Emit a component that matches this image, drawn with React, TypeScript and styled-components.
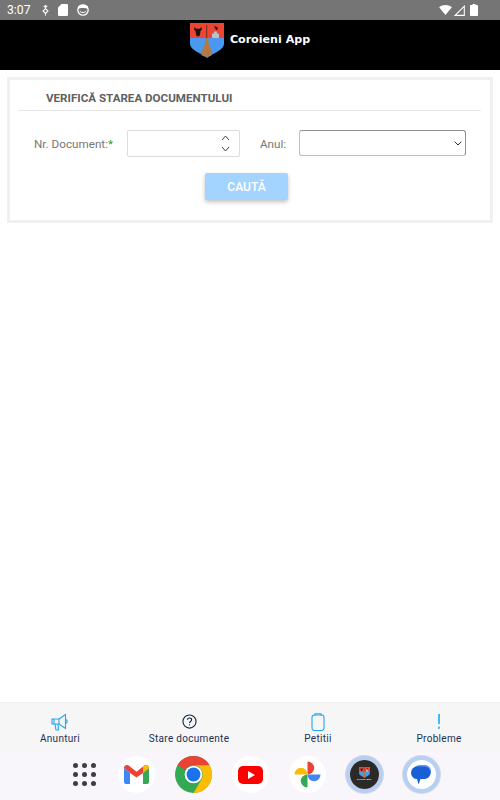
import styled, { createGlobalStyle } from 'styled-components'

const GlobalStyle = createGlobalStyle`
  html, body {
    margin: 0;
    padding: 0;
    background: #fff;
  }
  * {
    box-sizing: border-box;
  }
`

const tabs = [
  { label: 'Anunturi', icon: <MegaphoneIcon /> },
  { label: 'Stare documente', icon: <QuestionIcon /> },
  { label: 'Petitii', icon: <ClipboardIcon /> },
  { label: 'Probleme', icon: <BangIcon /> },
]

export default function App() {
  return (
    <Screen>
      <GlobalStyle />
      <StatusBar>
        <StatusLeft>
          <Clock>3:07</Clock>
          <UsbIcon />
          <SdIcon />
          <FaceIcon />
        </StatusLeft>
        <StatusRight>
          <WifiIcon />
          <SignalIcon />
          <BatteryIcon />
        </StatusRight>
      </StatusBar>

      <AppBar>
        <Shield />
        <AppTitle>Coroieni App</AppTitle>
      </AppBar>

      <Main>
        <Card>
          <CardTitle>VERIFICĂ STAREA DOCUMENTULUI</CardTitle>
          <FormRow>
            <FieldLabel>Nr. Document:<Required>*</Required></FieldLabel>
            <NumberBox>
              <Stepper />
            </NumberBox>
            <YearLabel>Anul:</YearLabel>
            <SelectBox>
              <SelectChevron />
            </SelectBox>
          </FormRow>
          <ButtonRow>
            <SearchButton disabled>CAUTĂ</SearchButton>
          </ButtonRow>
        </Card>
      </Main>

      <TabBar>
        {tabs.map((tab) => (
          <Tab key={tab.label}>
            <TabIcon>{tab.icon}</TabIcon>
            <TabLabel>{tab.label}</TabLabel>
          </Tab>
        ))}
      </TabBar>

      <Dock>
        <AppGrid>
          {Array.from({ length: 9 }).map((_, i) => <GridDot key={i} />)}
        </AppGrid>
        <DockCircle><GmailIcon /></DockCircle>
        <DockCircle><ChromeIcon /></DockCircle>
        <DockCircle><YoutubeIcon /></DockCircle>
        <DockCircle><PhotosIcon /></DockCircle>
        <RunningRing><AppThumb><Shield $small /><ThumbText>Coroieni App</ThumbText></AppThumb></RunningRing>
        <RunningRing><MessagesIcon /></RunningRing>
      </Dock>
    </Screen>
  )
}

function UsbIcon() {
  return (
    <svg width="7" height="11" viewBox="0 0 7 11" fill="none" stroke="#fff" strokeWidth="1.1">
      <path d="M3.5 0.5v2.5" />
      <path d="M1.8 2 3.5 0.5 5.2 2" />
      <path d="M3.5 3.6 1 6 3.5 8.4 6 6z" />
      <path d="M3.5 8.4v2.2" />
    </svg>
  )
}

function SdIcon() {
  return (
    <svg width="10" height="12" viewBox="0 0 10 12">
      <path d="M3.5 0H8.8A1.2 1.2 0 0 1 10 1.2V10.8A1.2 1.2 0 0 1 8.8 12H1.2A1.2 1.2 0 0 1 0 10.8V3.5z" fill="#fff" />
    </svg>
  )
}

function FaceIcon() {
  return (
    <svg width="12" height="12" viewBox="0 0 12 12">
      <circle cx="6" cy="6" r="5.2" fill="none" stroke="#fff" strokeWidth="1.3" />
      <path d="M1 5.2C3 3.6 9 3.6 11 5.2V2.6L8 0.8H4L1 2.6z" fill="#fff" />
      <path d="M2.8 7.2C4 9 8 9 9.2 7.2" fill="none" stroke="#fff" strokeWidth="1" />
    </svg>
  )
}

function WifiIcon() {
  return (
    <svg width="13" height="10" viewBox="0 0 14 11">
      <path d="M0 2.6C4-0.8 10-0.8 14 2.6L7 11z" fill="#fff" />
    </svg>
  )
}

function SignalIcon() {
  return (
    <svg width="11" height="11" viewBox="0 0 11 11" fill="none" stroke="#fff" strokeWidth="1.1">
      <path d="M10.3 1.2V10.4H1.2z" />
    </svg>
  )
}

function BatteryIcon() {
  return (
    <svg width="8" height="12" viewBox="0 0 8 12">
      <path d="M2.5 0H5.5V1H7.2A.8.8 0 0 1 8 1.8V11.2A.8.8 0 0 1 7.2 12H.8A.8.8 0 0 1 0 11.2V1.8A.8.8 0 0 1 .8 1H2.5z" fill="#fff" />
    </svg>
  )
}

function Shield({ $small }: { $small?: boolean }) {
  const w = $small ? 11 : 34
  const h = $small ? 11 : 35
  return (
    <svg width={w} height={h} viewBox="0 0 34 35">
      <path d="M0 0H34V21C34 27 23 30 17 35C11 30 0 27 0 21Z" fill="#4a98f0" />
      <path d="M0 0H34V15H0Z" fill="#ee4433" />
      <path d="M4.5 3.5C5 5 5.5 5.5 6.8 5.8H9.2C10.5 5.5 11 5 11.5 3.5L11.8 6.8 10.5 8 9.8 12.5 8 13.5 6.2 12.5 5.5 8 4.2 6.8Z" fill="#161616" />
      <path d="M22 15V10.5H24V8.5H27V10.5H29V15Z" fill="#c0c0c0" />
      <path d="M24 3 28 4.5 27 7.5 25.5 6Z" fill="#161616" />
      <path d="M16.2 2H17.2V15H16.2Z" fill="#6b3020" />
      <path d="M15.2 15H18.2L18.8 22C20.5 25 22 28 22 32C19.5 34 14 34 11.5 32C11.5 28 13 25 14.6 22Z" fill="#b27a3e" />
    </svg>
  )
}

function Stepper() {
  return (
    <svg width="9" height="19" viewBox="0 0 9 19" fill="none" stroke="#444" strokeWidth="1">
      <path d="M1 6 4.5 2 8 6" />
      <path d="M1 13 4.5 17 8 13" />
    </svg>
  )
}

function SelectChevron() {
  return (
    <svg width="8" height="5" viewBox="0 0 8 5" fill="none" stroke="#333" strokeWidth="1">
      <path d="M.7 .7 4 4 7.3 .7" />
    </svg>
  )
}

function MegaphoneIcon() {
  return (
    <svg width="18" height="18" viewBox="0 0 18 18" fill="none" stroke="#1ea7f5" strokeWidth="1.1">
      <path d="M1 6H8V11H1Z" />
      <path d="M8 6 14.5 1.5V15.5L8 11" />
      <path d="M4 11 5 17H7.5L7 11" />
      <path d="M14.5 6.5C16.8 7 16.8 10 14.5 10.5" />
      <path d="M3 6V11" />
    </svg>
  )
}

function QuestionIcon() {
  return (
    <svg width="15" height="15" viewBox="0 0 16 16" fill="none" stroke="#15233f" strokeWidth="1.2">
      <circle cx="8" cy="8" r="7" />
      <path d="M5.8 6.2C5.9 3.6 10.3 3.7 10.3 6.2 10.3 7.9 8 8 8 9.7" />
      <path d="M8 11V12.2" />
    </svg>
  )
}

function ClipboardIcon() {
  return (
    <svg width="14" height="18" viewBox="0 0 14 18" fill="none" stroke="#1ea7f5" strokeWidth="1.1">
      <rect x="1" y="2" width="12" height="15.5" rx="2.4" />
      <path d="M4 2.5V.7H10V2.5" />
    </svg>
  )
}

function BangIcon() {
  return (
    <svg width="4" height="15" viewBox="0 0 4 15" fill="#1ea7f5">
      <rect x="1.2" y="0" width="1.6" height="10" />
      <rect x="1.2" y="12.6" width="1.6" height="2.2" />
    </svg>
  )
}

function GmailIcon() {
  return (
    <svg width="25" height="19" viewBox="0 0 25 19">
      <path d="M0 3V17A2 2 0 0 0 2 19H6V8Z" fill="#4285f4" />
      <path d="M25 3V17A2 2 0 0 1 23 19H19V8Z" fill="#34a853" />
      <path d="M0 3C0 .5 3-.8 5 .8L12.5 6.8 20 .8C22-.8 25 .5 25 3L19 8 12.5 12.5 6 8Z" fill="#ea4335" />
      <path d="M19 8 25 3C25 .5 22-.8 20 .8L19 1.6Z" fill="#fbbc04" />
    </svg>
  )
}

function ChromeIcon() {
  return (
    <svg width="37" height="37" viewBox="0 0 48 48">
      <circle cx="24" cy="24" r="24" fill="#34a853" />
      <path d="M24 0A24 24 0 0 1 44.8 12H24A12 12 0 0 0 13.6 18L3.2 12A24 24 0 0 1 24 0Z" fill="#ea4335" />
      <path d="M44.8 12A24 24 0 0 1 24 48L34.4 30A12 12 0 0 0 34.4 18 12 12 0 0 0 24 12Z" fill="#fbbc04" />
      <circle cx="24" cy="24" r="11.5" fill="#fff" />
      <circle cx="24" cy="24" r="9" fill="#1a73e8" />
    </svg>
  )
}

function YoutubeIcon() {
  return (
    <svg width="25" height="18" viewBox="0 0 25 18">
      <rect width="25" height="18" rx="5" fill="#f00" />
      <path d="M10 5 17 9 10 13Z" fill="#fff" />
    </svg>
  )
}

function PhotosIcon() {
  return (
    <svg width="27" height="27" viewBox="0 0 28 28">
      <path d="M14 14V0.5A7 6.75 0 0 1 14 14Z" fill="#ea4335" />
      <path d="M14 14H27.5A6.75 7 0 0 1 14 14Z" fill="#4285f4" />
      <path d="M14 14V27.5A7 6.75 0 0 1 14 14Z" fill="#34a853" />
      <path d="M14 14H0.5A6.75 7 0 0 1 14 14Z" fill="#fbbc04" />
    </svg>
  )
}

function MessagesIcon() {
  return (
    <svg width="20" height="20" viewBox="0 0 20 20">
      <rect x="2.5" y="0" width="17.5" height="12.5" rx="6" fill="#5a96f2" />
      <path d="M6 1.5H13.5A6 6 0 0 1 19.5 7.5V8A6 6 0 0 1 13.5 14H9.5L7.5 19.5 6 14A6 6.2 0 0 1 0 7.7A6 6.2 0 0 1 6 1.5Z" fill="#1a5fd6" />
    </svg>
  )
}

const Screen = styled.div`
  width: 500px;
  height: 800px;
  display: flex;
  flex-direction: column;
  background: #fff;
  overflow: hidden;
  font-family: Roboto, "Liberation Sans", sans-serif;
`

const StatusBar = styled.div`
  height: 20px;
  flex: none;
  background: #757575;
  display: flex;
  align-items: center;
  justify-content: space-between;
  padding: 0 22px 0 7px;
`

const StatusLeft = styled.div`
  display: flex;
  align-items: center;
  gap: 9px;
`

const Clock = styled.span`
  color: #fff;
  font-size: 12.2px;
  margin-right: 2px;
`

const StatusRight = styled.div`
  display: flex;
  align-items: center;
  gap: 2px;

  & > svg:last-child {
    margin-left: 3px;
  }
`

const AppBar = styled.div`
  height: 50px;
  flex: none;
  background: #000;
  display: flex;
  align-items: flex-start;
  justify-content: center;
  gap: 6px;
  padding: 3px 0 0;
`

const AppTitle = styled.span`
  color: #fff;
  font-family: "DejaVu Sans", sans-serif;
  font-weight: 700;
  font-size: 11.1px;
  line-height: 13px;
  margin-top: 10px;
`

const Main = styled.main`
  flex: 1;
  padding: 7px 7px 0;
`

const Card = styled.section`
  height: 146px;
  border: 3px solid #f0f0f0;
  padding: 0 9px;
`

const CardTitle = styled.h2`
  margin: 0;
  height: 31px;
  padding: 10px 0 0 27px;
  border-bottom: 1px solid #e8e8e8;
  color: #616161;
  font-size: 11.6px;
  font-weight: 700;
  line-height: 16px;
`

const FormRow = styled.div`
  display: flex;
  align-items: flex-start;
  margin-top: 19px;
  padding-left: 15px;
`

const FieldLabel = styled.label`
  width: 93px;
  color: #777;
  font-size: 11.7px;
  line-height: 28px;
`

const Required = styled.span`
  color: #1f9d2a;
`

const NumberBox = styled.div`
  width: 113px;
  height: 27px;
  background: #fff;
  border: 1px solid #dcdcdc;
  border-radius: 2px;
  display: flex;
  align-items: center;
  justify-content: flex-end;
  padding-right: 9px;
`

const YearLabel = styled.span`
  width: 59px;
  padding-left: 20px;
  color: #777;
  font-size: 11.7px;
  line-height: 28px;
`

const SelectBox = styled.div`
  width: 167px;
  height: 26px;
  background: #fff;
  border: 1px solid #8f8f8f;
  border-bottom-color: #bdbdbd;
  border-left-color: #bdbdbd;
  border-radius: 3px;
  display: flex;
  align-items: center;
  justify-content: flex-end;
  padding-right: 3px;
`

const ButtonRow = styled.div`
  display: flex;
  justify-content: center;
  margin-top: 15px;
  padding-right: 7px;
`

const SearchButton = styled.button`
  width: 83px;
  height: 27px;
  border: 0;
  border-radius: 2px;
  background: #a3d3ff;
  color: #fff;
  font-family: inherit;
  font-size: 12px;
  font-weight: 500;
  box-shadow: 0 2px 4px rgba(0, 0, 0, 0.25);
`

const TabBar = styled.nav`
  height: 48px;
  flex: none;
  background: #f6f6f6;
  border-top: 1px solid #f0f0f0;
  display: grid;
  grid-template-columns: 120px 138px 120px 122px;
`

const Tab = styled.div`
  display: flex;
  flex-direction: column;
  align-items: center;
`

const TabIcon = styled.div`
  height: 28px;
  padding-top: 9px;
  display: flex;
  align-items: center;
  justify-content: center;
`

const TabLabel = styled.span`
  color: #1c2f52;
  font-size: 10px;
  letter-spacing: 0.3px;
  line-height: 12px;
  margin-top: 2px;
`

const Dock = styled.div`
  height: 50px;
  flex: none;
  background: #f8f5fb;
  display: grid;
  grid-template-columns: 47px repeat(6, 57px);
  justify-items: center;
  align-items: center;
  padding: 0 0 1px 60.5px;
`

const AppGrid = styled.div`
  display: grid;
  grid-template-columns: repeat(3, 5px);
  gap: 4px;
`

const GridDot = styled.span`
  width: 5px;
  height: 5px;
  border-radius: 50%;
  background: #3c3c46;
`

const DockCircle = styled.div`
  width: 37px;
  height: 37px;
  border-radius: 50%;
  background: #fff;
  display: flex;
  align-items: center;
  justify-content: center;
`

const RunningRing = styled.div`
  width: 37px;
  height: 37px;
  border-radius: 50%;
  border: 4px solid #b6cff2;
  box-shadow: 0 0 0 1px #d4d8e4;
  background: #fff;
  display: flex;
  align-items: center;
  justify-content: center;
`

const AppThumb = styled.div`
  width: 29px;
  height: 29px;
  flex: none;
  border-radius: 50%;
  background: #2c2a28;
  display: flex;
  flex-direction: column;
  align-items: center;
  justify-content: center;
`

const ThumbText = styled.span`
  color: #fff;
  font-size: 2.5px;
  line-height: 4px;
`
